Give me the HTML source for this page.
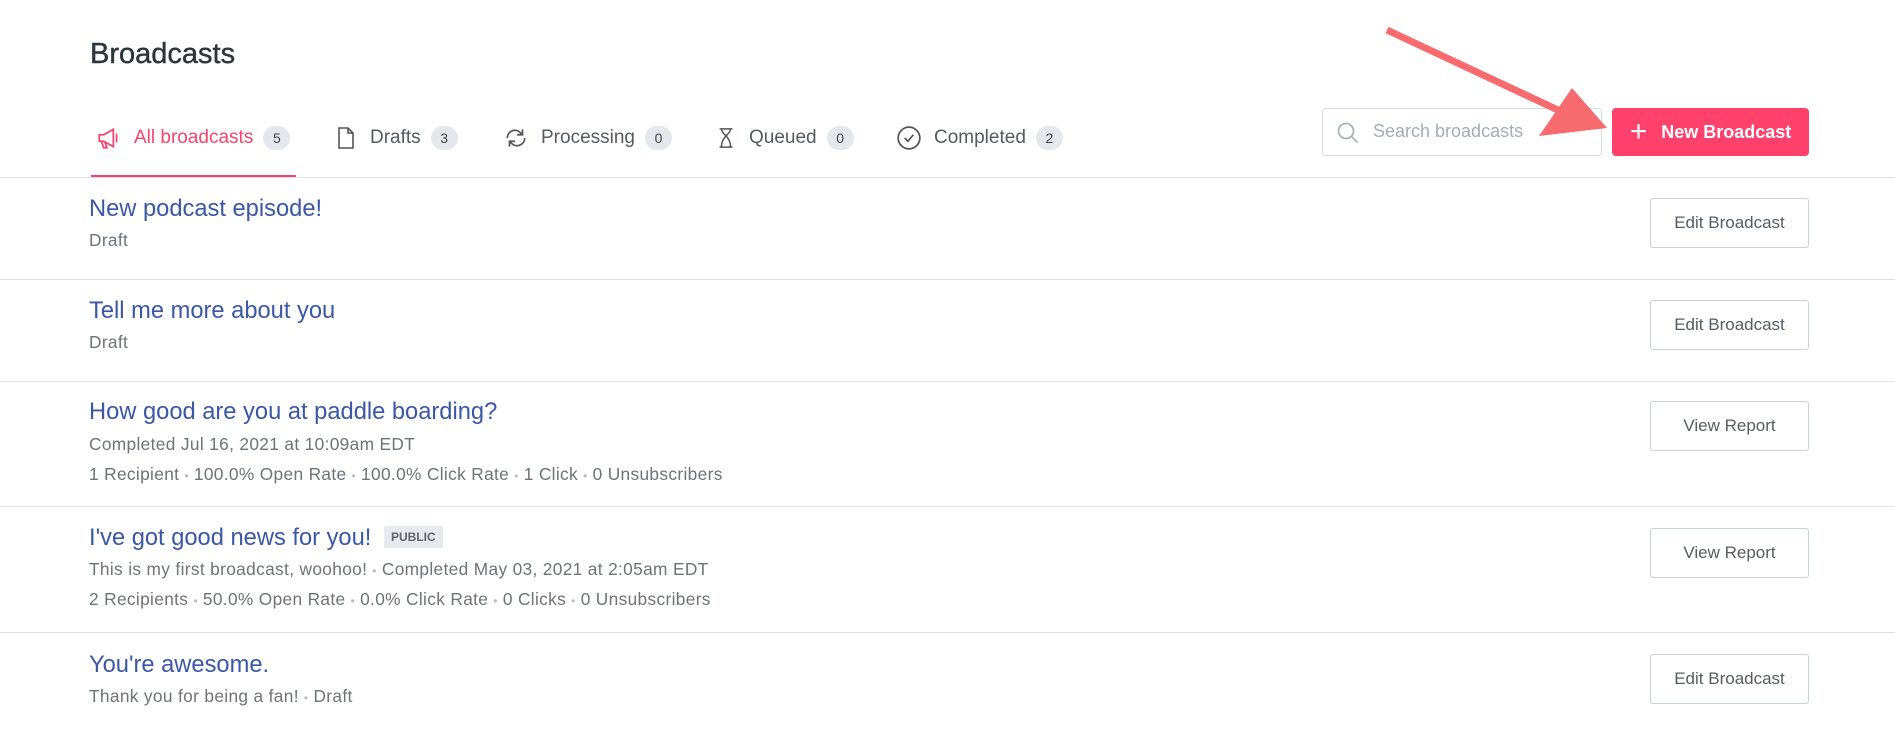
<!DOCTYPE html>
<html><head><meta charset="utf-8"><style>
*{margin:0;padding:0;box-sizing:border-box}
body{width:1895px;height:733px;background:#fff;font-family:"Liberation Sans",sans-serif;position:relative;overflow:hidden;color:#373f47}
.abs{position:absolute;white-space:nowrap}
h1{position:absolute;left:90px;top:38px;font-size:29px;font-weight:normal;color:#2c343c;-webkit-text-stroke:0.4px #2c343c}
.tab{position:absolute;top:124px;height:28px;display:flex;align-items:center;font-size:19px;color:#545b63}
.tab svg{margin-right:12px}
.badge{display:inline-block;background:#e4e8ed;border-radius:12px;font-size:14px;color:#444;height:24px;line-height:24px;min-width:27px;text-align:center;margin-left:10px}
.line{position:absolute;left:0;width:1895px;height:1px;background:#dde1e5}
.btn{position:absolute;left:1650px;width:159px;height:50px;border:1px solid #ccd1d6;border-radius:3px;font-size:17px;color:#555c63;display:flex;align-items:center;justify-content:center;background:#fff}
.t{position:absolute;left:89px;font-size:23.7px;color:#3b57a6;white-space:nowrap}
.s{position:absolute;left:89px;font-size:17.3px;letter-spacing:0.35px;color:#6d737a;white-space:nowrap}
.d{color:#bbb;margin:0 5px;font-size:12px}
</style></head><body>
<h1>Broadcasts</h1>
<div class="tab" style="left:96px;color:#f4446d"><svg width="26" height="26" viewBox="0 0 24 24" fill="none" stroke="#f4446d" stroke-width="1.6"><path d="M3 9h4l9-5v16l-9-5H3z"/><path d="M5 15l2 6h3l-2-6"/><path d="M19 8v8"/></svg>All broadcasts<span class="badge">5</span></div>
<div class="tab" style="left:334px"><svg width="24" height="26" viewBox="0 0 24 24" fill="none" stroke="#555" stroke-width="1.6"><path d="M5 2h9l5 5v15H5z"/><path d="M14 2v5h5"/></svg>Drafts<span class="badge">3</span></div>
<div class="tab" style="left:503px"><svg width="26" height="26" viewBox="0 0 24 24" fill="none" stroke="#555" stroke-width="1.6"><path d="M4 12a7 7 0 0 1 12-5l2 2"/><path d="M18 4v5h-5"/><path d="M20 12a7 7 0 0 1-12 5l-2-2"/><path d="M6 20v-5h5"/></svg>Processing<span class="badge">0</span></div>
<div class="tab" style="left:715px"><svg width="22" height="26" viewBox="0 0 24 24" fill="none" stroke="#555" stroke-width="1.6"><path d="M5 2h14M5 22h14M7 2c0 6 10 8 10 20M17 2c0 6-10 8-10 20"/></svg>Queued<span class="badge">0</span></div>
<div class="tab" style="left:896px"><svg width="26" height="26" viewBox="0 0 24 24" fill="none" stroke="#555" stroke-width="1.6"><circle cx="12" cy="12" r="10"/><path d="M8 12l3 3 5-6"/></svg>Completed<span class="badge">2</span></div>
<div class="abs" style="left:91px;top:175px;width:205px;height:2px;background:#f4446d"></div>
<div class="line" style="top:177px"></div>
<div class="abs" style="left:1322px;top:108px;width:280px;height:48px;border:1px solid #d6dbe0;border-radius:4px;font-size:18px;color:#a4adb6;padding:12px 0 0 50px"><svg style="position:absolute;left:13px;top:12px" width="24" height="24" viewBox="0 0 24 24" fill="none" stroke="#aab2ba" stroke-width="1.8"><circle cx="10" cy="10" r="7.5"/><path d="M15.5 15.5l6 6"/></svg>Search broadcasts</div>
<div class="abs" style="left:1612px;top:108px;width:197px;height:48px;background:#ff416c;border-radius:4px;color:#fff;font-size:18px;font-weight:bold;display:flex;align-items:center;justify-content:center"><span style="font-weight:normal;font-size:30px;margin-right:14px;line-height:1">+</span>New Broadcast</div>
<svg class="abs" style="left:0;top:0" width="1895" height="200"><line x1="1387" y1="30" x2="1575" y2="118" stroke="#f76b6e" stroke-width="7"/><polygon points="1539,136 1572,88 1607,128" fill="#f76b6e"/></svg>
<div class="t" style="top:196px">New podcast episode!</div><div class="s" style="top:230px">Draft</div><div class="btn" style="top:198px">Edit Broadcast</div>
<div class="line" style="top:279px"></div>
<div class="t" style="top:298px">Tell me more about you</div><div class="s" style="top:332px">Draft</div><div class="btn" style="top:300px">Edit Broadcast</div>
<div class="line" style="top:381px"></div>
<div class="t" style="top:399px">How good are you at paddle boarding?</div><div class="s" style="top:434px">Completed Jul 16, 2021 at 10:09am EDT</div>
<div class="s" style="top:464px">1 Recipient<span class="d">•</span>100.0% Open Rate<span class="d">•</span>100.0% Click Rate<span class="d">•</span>1 Click<span class="d">•</span>0 Unsubscribers</div><div class="btn" style="top:401px">View Report</div>
<div class="line" style="top:506px"></div>
<div class="t" style="top:525px">I've got good news for you! <span style="display:inline-block;background:#e6eaee;font-size:12px;font-weight:bold;color:#5f666d;padding:4px 7px;vertical-align:4px;border-radius:2px;margin-left:6px">PUBLIC</span></div>
<div class="s" style="top:559px">This is my first broadcast, woohoo!<span class="d">•</span>Completed May 03, 2021 at 2:05am EDT</div>
<div class="s" style="top:589px">2 Recipients<span class="d">•</span>50.0% Open Rate<span class="d">•</span>0.0% Click Rate<span class="d">•</span>0 Clicks<span class="d">•</span>0 Unsubscribers</div><div class="btn" style="top:528px">View Report</div>
<div class="line" style="top:632px"></div>
<div class="t" style="top:652px">You're awesome.</div><div class="s" style="top:686px">Thank you for being a fan!<span class="d">•</span>Draft</div><div class="btn" style="top:654px">Edit Broadcast</div>
</body></html>
